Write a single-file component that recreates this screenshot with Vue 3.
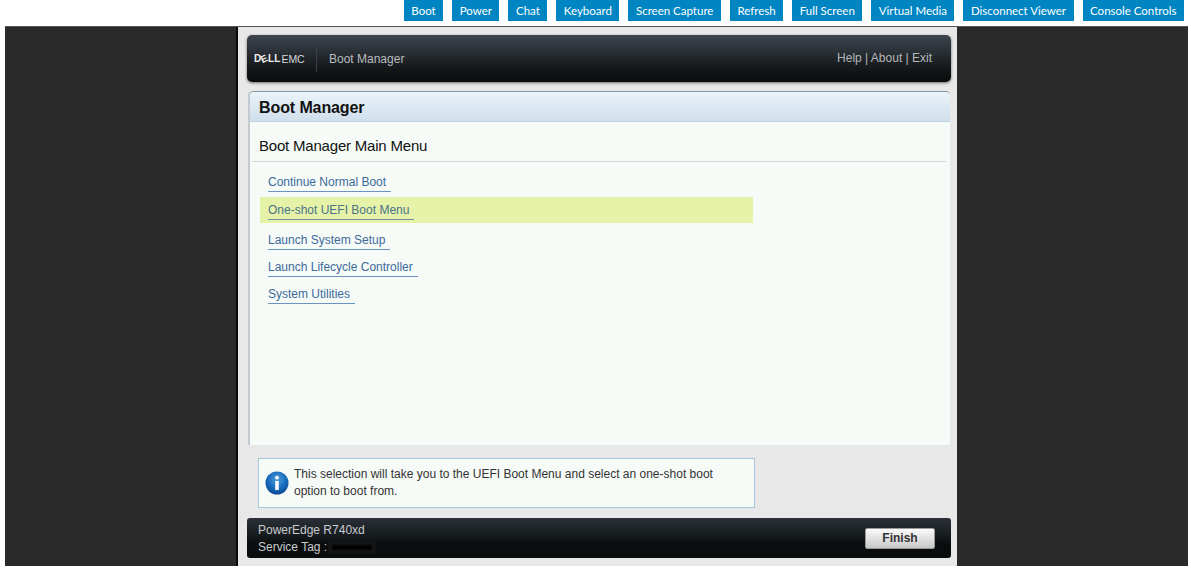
<script setup>
const tools = ['Boot', 'Power', 'Chat', 'Keyboard', 'Screen Capture', 'Refresh', 'Full Screen', 'Virtual Media', 'Disconnect Viewer', 'Console Controls']
const links = [
  { label: 'Continue Normal Boot' },
  { label: 'One-shot UEFI Boot Menu', active: true },
  { label: 'Launch System Setup' },
  { label: 'Launch Lifecycle Controller' },
  { label: 'System Utilities' },
]
</script>

<template>
  <div class="page">
    <nav class="toolbar">
      <button v-for="t in tools" :key="t" class="tool">{{ t }}</button>
    </nav>
    <main class="viewer">
      <section class="console">
        <header class="head">
          <div class="logo"><b>D<i>E</i>LL</b><span>EMC</span></div>
          <div class="app-title">Boot Manager</div>
          <div class="head-links">Help | About | Exit</div>
        </header>

        <div class="panel">
          <h1 class="panel-title">Boot Manager</h1>
          <div class="panel-body">
            <h2 class="menu-title">Boot Manager Main Menu</h2>
            <ul class="menu">
              <li v-for="l in links" :key="l.label" class="row" :class="{ active: l.active }">
                <a class="link">{{ l.label }}</a>
              </li>
            </ul>
          </div>
        </div>

        <div class="help">
          <svg class="info" viewBox="0 0 24 24" width="24" height="24">
            <defs>
              <radialGradient id="ig" cx="50%" cy="35%" r="70%">
                <stop offset="0" stop-color="#4f9fe0" />
                <stop offset="0.6" stop-color="#1468b8" />
                <stop offset="1" stop-color="#0b3f85" />
              </radialGradient>
            </defs>
            <circle cx="12" cy="12" r="11.5" fill="url(#ig)" />
            <circle cx="12" cy="6.6" r="1.9" fill="#fff" />
            <rect x="10.2" y="10" width="3.6" height="9" rx="0.6" fill="#fff" />
          </svg>
          <p class="help-text">This selection will take you to the UEFI Boot Menu and select an one-shot boot option to boot from.</p>
        </div>

        <footer class="foot">
          <div class="sys">
            <div>PowerEdge R740xd</div>
            <div class="tag">Service Tag : <span class="redact"></span></div>
          </div>
          <button class="finish">Finish</button>
        </footer>
      </section>
    </main>
  </div>
</template>

<style>
html, body { margin: 0; background: #fff; overflow: hidden; }
</style>

<style scoped>
.page {
  width: 1191px;
  height: 569px;
  display: flex;
  flex-direction: column;
  background: #fff;
  font-family: "Liberation Sans", Arial, sans-serif;
}
.toolbar {
  height: 26px;
  display: flex;
  justify-content: flex-end;
  align-items: flex-start;
  gap: 9px;
  padding-right: 7px;
  box-sizing: border-box;
}
.tool {
  height: 21px;
  padding: 0 7.5px;
  border: 0;
  background: #0085c3;
  color: #fff;
  font: 11.5px/21px Lato, "Open Sans", sans-serif;
  white-space: nowrap;
}
.viewer {
  margin: 0 3px 3px 5px;
  height: 540px;
  background: #2a2a2a;
  border-top: 1px solid #555;
  box-sizing: border-box;
  display: flex;
  justify-content: flex-start;
  padding-left: 231px;
}
.console {
  width: 719px;
  height: 100%;
  background: #e8e8e8;
  border-left: 2px solid #0a0a0a;
  margin-left: 0;
  padding: 8px 6px 0 9px;
  box-sizing: content-box;
  width: 704px;
  display: flex;
  flex-direction: column;
  height: calc(100% - 8px);
}
.head {
  height: 47px;
  border-radius: 5px;
  background: linear-gradient(#3c444e 0%, #2a3036 35%, #14181a 70%, #0a0c0c 100%);
  box-shadow: 0 1px 3px rgba(0, 0, 0, .55);
  display: flex;
  align-items: center;
  color: #c9ccce;
  flex: none;
}
.logo {
  width: 62px;
  height: 26px;
  margin-left: 7px;
  border-right: 1px solid #3a4045;
  display: flex;
  align-items: center;
  font-size: 10px;
  letter-spacing: -.1px;
  color: #d8d8d8;
  line-height: 26px;
}
.logo b { font-weight: 700; color: #eee; letter-spacing: .1px; }
.logo i { display: inline-block; font-style: normal; transform: rotate(-25deg); }
.logo span { margin-left: 1px; font-size: 10.5px; }
.app-title {
  margin-left: 12px;
  font-size: 12px;
  color: #b9bcbe;
}
.head-links {
  margin-left: auto;
  margin-right: 19px;
  font-size: 12px;
  color: #b5b8ba;
  position: relative;
  top: -1px;
}
.panel {
  margin: 9px 1px 0;
  height: 354px;
  flex: none;
  display: flex;
  flex-direction: column;
  border-left: 2px solid #c4cbd0;
  border-radius: 4px 4px 0 0;
  box-sizing: border-box;
  background: #f6fbf8;
}
.panel-title {
  margin: 0;
  height: 31px;
  padding-left: 9px;
  background: linear-gradient(#eaf3f8, #cfdfec);
  border-top: 1px solid #8796a3;
  border-bottom: 1px solid #c2d2e0;
  box-sizing: border-box;
  border-radius: 4px 4px 0 0;
  font-size: 16px;
  line-height: 32px;
  font-weight: 700;
  color: #111;
  letter-spacing: -.1px;
}
.panel-body { padding: 0 4px 0 2px; }
.menu-title {
  margin: 0;
  height: 39px;
  padding-left: 7px;
  border-bottom: 1px solid #d4d8d8;
  font-size: 15px;
  font-weight: 400;
  line-height: 47px;
  color: #111;
  letter-spacing: -.2px;
}
.menu {
  list-style: none;
  margin: 8px 0 0;
  padding: 0;
}
.row {
  height: 27px;
  padding-left: 8px;
  margin-left: 8px;
  width: 485px;
  display: block;
  box-sizing: content-box;
}
.row.active {
  height: 26px;
  background: #e6f2a8;
  margin-bottom: 5px;
  margin-top: 0;
}
.link {
  display: inline-block;
  height: 21px;
  padding-right: 5px;
  border-bottom: 1px solid #6b94c2;
  color: #3d6a9c;
  font-size: 12px;
  line-height: 24px;
}
.active .link { height: 22px; border-bottom-color: #6b8fa8; line-height: 26px; color: #4a7488; }
.help {
  margin: 13px 0 0 11px;
  width: 497px;
  height: 50px;
  flex: none;
  box-sizing: border-box;
  background: #f6fbf8;
  border: 1px solid #a9c8dd;
  display: flex;
  align-items: center;
}
.info { margin-left: 6px; flex: none; }
.help-text {
  margin: 0 0 0 5px;
  width: 450px;
  font-size: 12px;
  line-height: 17px;
  color: #333;
}
.foot {
  margin-top: 10px;
  height: 40px;
  flex: none;
  border-radius: 3px;
  background: linear-gradient(#2a3036 0%, #1b2024 35%, #0a0d0d 65%, #0a0d0d 100%);
  display: flex;
  align-items: center;
  justify-content: space-between;
  padding: 0 16px 0 11px;
  color: #c8cbcd;
  font-size: 12px;
}
.sys { line-height: 17.5px; position: relative; top: 1px; }
.tag { display: flex; align-items: center; white-space: pre; }
.redact {
  display: inline-block;
  width: 42px;
  height: 7px;
  margin-left: 1px;
  background: #000;
  filter: blur(1.5px);
  outline: 1px solid rgba(200, 200, 200, .25);
}
.finish {
  width: 70px;
  height: 21px;
  border: 1px solid #999;
  border-radius: 2px;
  background: linear-gradient(#fbfbfb, #c8c8c8);
  color: #333;
  font: 700 12px/19px "Liberation Sans", Arial, sans-serif;
  padding: 0;
}
</style>
